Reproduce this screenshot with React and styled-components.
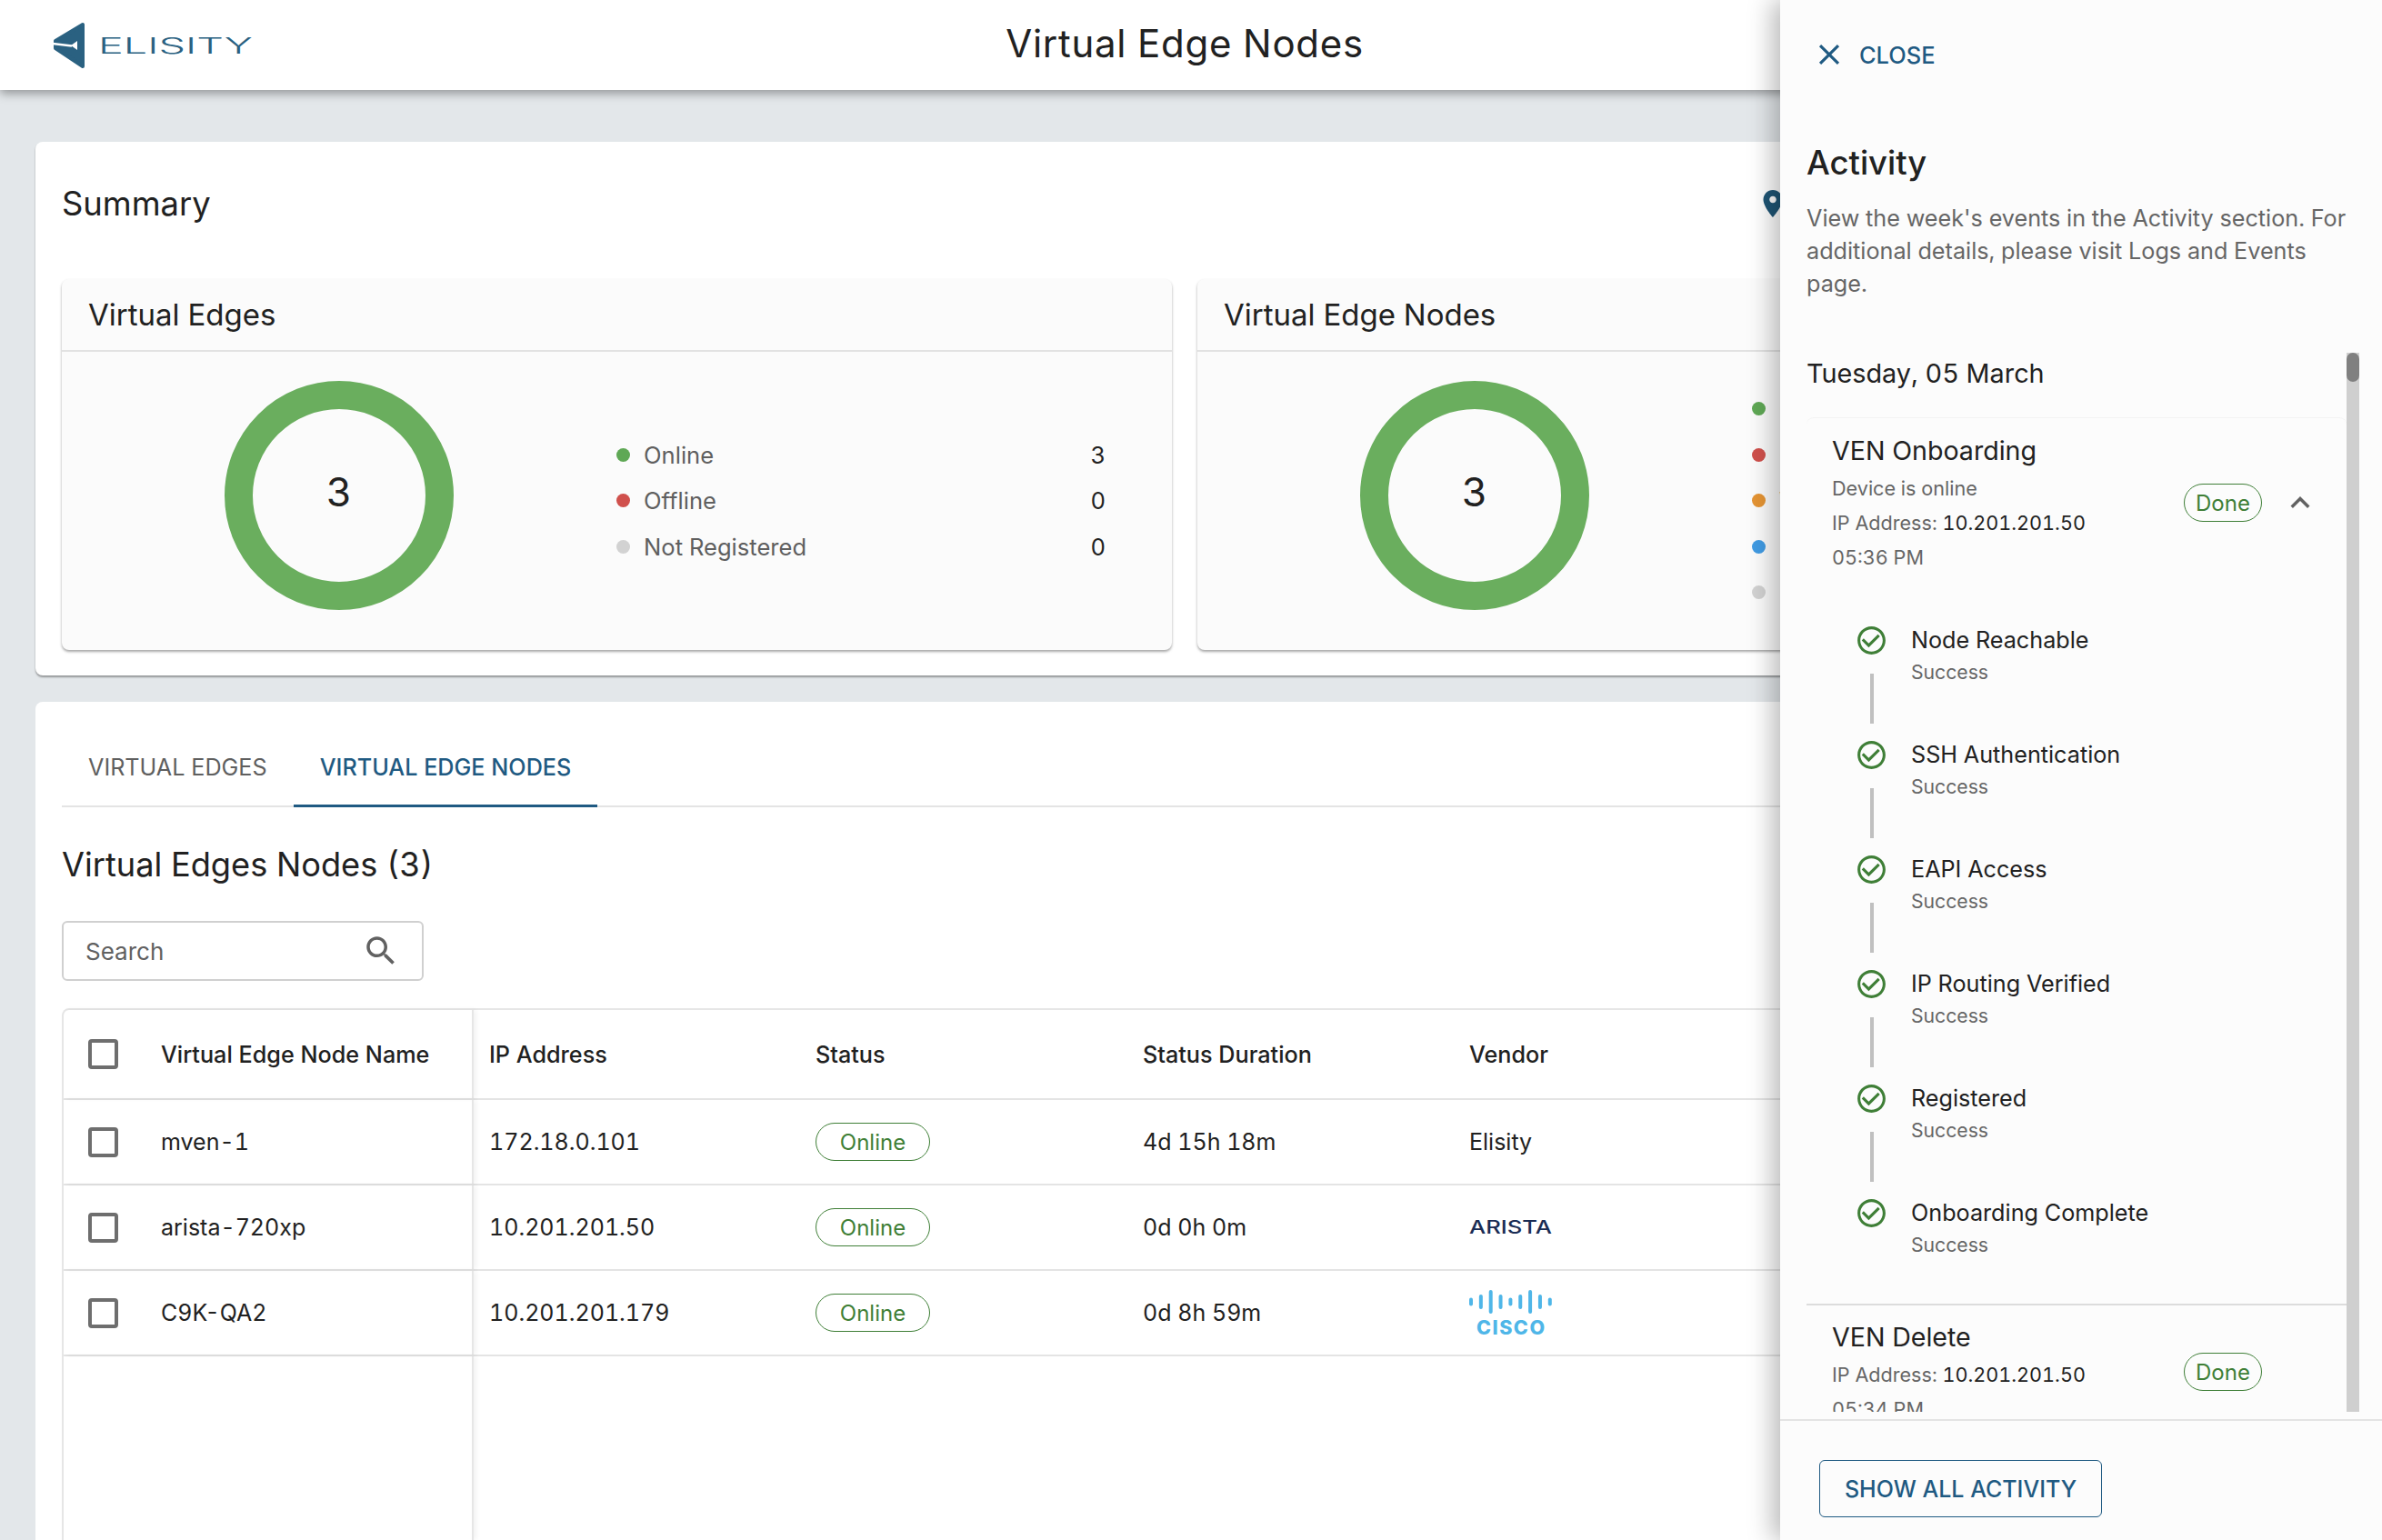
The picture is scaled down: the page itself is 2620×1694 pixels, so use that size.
import React from "react";
import styled, { createGlobalStyle } from "styled-components";

const GlobalStyle = createGlobalStyle`
  html, body {
    margin: 0;
    padding: 0;
    background: #e3e7ea;
    font-family: Inter, "Noto Sans", sans-serif;
    font-variant-numeric: tabular-nums;
    color: #212121;
  }
  * {
    box-sizing: border-box;
  }
`;

const BLUE = "#1f5a82";
const GREEN = "#3f7f37";

const rows = [
  { name: "mven-1", ip: "172.18.0.101", duration: "4d 15h 18m", vendor: "elisity" },
  { name: "arista-720xp", ip: "10.201.201.50", duration: "0d 0h 0m", vendor: "arista" },
  { name: "C9K-QA2", ip: "10.201.201.179", duration: "0d 8h 59m", vendor: "cisco" },
];

const steps = [
  "Node Reachable",
  "SSH Authentication",
  "EAPI Access",
  "IP Routing Verified",
  "Registered",
  "Onboarding Complete",
];

function Logo() {
  return (
    <LogoRow>
      <svg width="36" height="52" viewBox="-1 -1 36 52">
        <path
          d="M32 2V48L2 28V20Z"
          fill="#2a6181"
          stroke="#2a6181"
          strokeWidth="4"
          strokeLinejoin="round"
        />
        <path d="M-1 23 L20 25.5" stroke="#fff" strokeWidth="2.6" />
        <path d="M19 25 L26 20 V30Z" fill="#fff" />
      </svg>
      <svg width="172" height="20" viewBox="0 0 172 20">
        <text
          x="0"
          y="18"
          fontFamily="Inter, sans-serif"
          fontSize="23.5"
          fontWeight="300"
          fill="#2a6181"
          textLength="170"
          lengthAdjust="spacingAndGlyphs"
        >
          ELISITY
        </text>
      </svg>
    </LogoRow>
  );
}

function Ring() {
  return (
    <RingWrap>
      <svg width="252" height="252" viewBox="0 0 252 252">
        <circle cx="126" cy="126" r="110.5" fill="none" stroke="#6aae5e" strokeWidth="31" />
      </svg>
      <RingValue>3</RingValue>
    </RingWrap>
  );
}

function AristaLogo() {
  return (
    <svg width="92" height="20" viewBox="0 0 92 20">
      <text
        x="0"
        y="17"
        fontFamily="Inter, sans-serif"
        fontSize="19.5"
        fontWeight="500"
        fill="#1a2c54"
        textLength="91"
        lengthAdjust="spacingAndGlyphs"
      >
        ARISTA
      </text>
    </svg>
  );
}

function CiscoLogo() {
  const bars = [9, 16, 26, 16, 9, 16, 26, 16, 9];
  return (
    <svg width="92" height="50" viewBox="0 0 92 50">
      {bars.map((h, i) => (
        <rect
          key={i}
          x={0 + i * 10.85}
          y={13 - h / 2}
          width="4"
          height={h}
          rx="2"
          fill="#4fb6e8"
        />
      ))}
      <text
        x="8"
        y="49"
        fontFamily="Inter, sans-serif"
        fontSize="21.5"
        fontWeight="800"
        fill="#4fb6e8"
        textLength="75"
        lengthAdjust="spacing"
      >
        CISCO
      </text>
    </svg>
  );
}

function Legend({ items }) {
  return (
    <LegendList>
      {items.map((item) => (
        <LegendRow key={item.label}>
          <Dot $color={item.color} />
          <LegendLabel>{item.label}</LegendLabel>
          <LegendValue>{item.value}</LegendValue>
        </LegendRow>
      ))}
    </LegendList>
  );
}

function CheckIcon() {
  return (
    <svg width="37" height="37" viewBox="0 0 24 24" fill={GREEN}>
      <path d="M16.59 7.58 10 14.17l-3.59-3.58L5 12l5 5 8-8zM12 2C6.48 2 2 6.48 2 12s4.48 10 10 10 10-4.48 10-10S17.52 2 12 2zm0 18c-4.42 0-8-3.58-8-8s3.58-8 8-8 8 3.58 8 8-3.58 8-8 8z" />
    </svg>
  );
}

export default function App() {
  return (
    <Page>
      <GlobalStyle />
      <Header>
        <Logo />
        <PageTitle>Virtual Edge Nodes</PageTitle>
      </Header>

      <Content>
        <SummaryPanel>
          <SummaryHead>
            <SummaryTitle>Summary</SummaryTitle>
            <PinIcon width="36" height="36" viewBox="0 0 24 24" fill="#1f5676">
              <path d="M12 2C8.13 2 5 5.13 5 9c0 5.25 7 13 7 13s7-7.75 7-13c0-3.87-3.13-7-7-7zm0 9.5c-1.38 0-2.5-1.12-2.5-2.5s1.12-2.5 2.5-2.5 2.5 1.12 2.5 2.5-1.12 2.5-2.5 2.5z" />
            </PinIcon>
          </SummaryHead>
          <StatCards>
            <StatCard>
              <StatHead>Virtual Edges</StatHead>
              <StatBody>
                <Ring />
                <Legend
                  items={[
                    { label: "Online", value: 3, color: "#5fa855" },
                    { label: "Offline", value: 0, color: "#d0504c" },
                    { label: "Not Registered", value: 0, color: "#d2d2d2" },
                  ]}
                />
              </StatBody>
            </StatCard>
            <StatCard>
              <StatHead>Virtual Edge Nodes</StatHead>
              <StatBody>
                <Ring />
                <Legend
                  items={[
                    { label: "Online", value: 3, color: "#5fa855" },
                    { label: "Offline", value: 0, color: "#d0504c" },
                    { label: "Warning", value: 0, color: "#e59433" },
                    { label: "Pending", value: 0, color: "#419be3" },
                    { label: "Not Registered", value: 0, color: "#d2d2d2" },
                  ]}
                />
              </StatBody>
            </StatCard>
          </StatCards>
        </SummaryPanel>

        <TablePanel>
          <Tabs>
            <Tab>VIRTUAL EDGES</Tab>
            <Tab $active>VIRTUAL EDGE NODES</Tab>
          </Tabs>
          <SectionTitle>Virtual Edges Nodes (3)</SectionTitle>
          <SearchBox>
            <SearchText>Search</SearchText>
            <svg width="42" height="42" viewBox="0 0 24 24" fill="#616161">
              <path d="M15.5 14h-.79l-.28-.27C15.41 12.59 16 11.11 16 9.5 16 5.91 13.09 3 9.5 3S3 5.91 3 9.5 5.91 16 9.5 16c1.61 0 3.09-.59 4.23-1.57l.27.28v.79l5 4.99L20.49 19l-4.99-5zm-6 0C7.01 14 5 11.99 5 9.5S7.01 5 9.5 5 14 7.01 14 9.5 11.99 14 9.5 14z" />
            </svg>
          </SearchBox>
          <TableBox>
            <Row $head>
              <NameCell>
                <CheckBox />
                <HeadText>Virtual Edge Node Name</HeadText>
              </NameCell>
              <Cell><HeadText>IP Address</HeadText></Cell>
              <Cell><HeadText>Status</HeadText></Cell>
              <Cell><HeadText>Status Duration</HeadText></Cell>
              <Cell><HeadText>Vendor</HeadText></Cell>
            </Row>
            {rows.map((row) => (
              <Row key={row.name}>
                <NameCell>
                  <CheckBox />
                  <CellText>{row.name}</CellText>
                </NameCell>
                <Cell><CellText>{row.ip}</CellText></Cell>
                <Cell><StatusPill>Online</StatusPill></Cell>
                <Cell><CellText>{row.duration}</CellText></Cell>
                <Cell>
                  {row.vendor === "elisity" && <CellText>Elisity</CellText>}
                  {row.vendor === "arista" && <AristaLogo />}
                  {row.vendor === "cisco" && <CiscoLogo />}
                </Cell>
              </Row>
            ))}
            <FillerRow>
              <FillerCell />
            </FillerRow>
          </TableBox>
        </TablePanel>
      </Content>

      <Drawer>
        <CloseButton>
          <svg width="38" height="38" viewBox="0 0 24 24" fill={BLUE}>
            <path d="M19 6.41 17.59 5 12 10.59 6.41 5 5 6.41 10.59 12 5 17.59 6.41 19 12 13.41 17.59 19 19 17.59 13.41 12z" />
          </svg>
          CLOSE
        </CloseButton>
        <DrawerTitle>Activity</DrawerTitle>
        <DrawerText>
          View the week's events in the Activity section. For additional details, please visit Logs
          and Events page.
        </DrawerText>

        <ActivityArea>
          <ActivityList>
            <DateLabel>Tuesday, 05 March</DateLabel>
            <EventCard $first>
              <EventHead>
                <EventInfo>
                  <EventTitle>VEN Onboarding</EventTitle>
                  <EventLine>Device is online</EventLine>
                  <EventLine>
                    IP Address: <strong>10.201.201.50</strong>
                  </EventLine>
                  <EventLine>05:36 PM</EventLine>
                </EventInfo>
                <DonePill>Done</DonePill>
                <ChevronSlot>
                  <svg width="42" height="42" viewBox="0 0 24 24" fill="#616161">
                    <path d="M12 8l-6 6 1.41 1.41L12 10.83l4.59 4.58L18 14z" />
                  </svg>
                </ChevronSlot>
              </EventHead>
              <StepList>
                {steps.map((step, i) => (
                  <Step key={step}>
                    <StepMarker>
                      <CheckIcon />
                      {i < steps.length - 1 && <Connector />}
                    </StepMarker>
                    <div>
                      <StepTitle>{step}</StepTitle>
                      <StepSub>Success</StepSub>
                    </div>
                  </Step>
                ))}
              </StepList>
            </EventCard>
            <EventCard>
              <EventHead>
                <EventInfo>
                  <EventTitle>VEN Delete</EventTitle>
                  <EventLine>
                    IP Address: <strong>10.201.201.50</strong>
                  </EventLine>
                  <EventLine>05:34 PM</EventLine>
                </EventInfo>
                <DonePill>Done</DonePill>
                <ChevronSlot />
              </EventHead>
            </EventCard>
          </ActivityList>
          <ScrollTrack>
            <ScrollThumb />
          </ScrollTrack>
        </ActivityArea>

        <DrawerFooter>
          <OutlineButton>SHOW ALL ACTIVITY</OutlineButton>
        </DrawerFooter>
      </Drawer>
    </Page>
  );
}

const Page = styled.div`
  position: relative;
  width: 2620px;
  height: 1694px;
  overflow: hidden;
  display: flex;
  flex-direction: column;
  background: #e3e7ea;
`;
const Header = styled.header`
  position: relative;
  z-index: 2;
  flex: 0 0 99px;
  display: grid;
  grid-template-columns: 1fr auto 1fr;
  align-items: center;
  background: #fff;
  box-shadow: 0 4px 10px rgba(0, 0, 0, 0.35);
`;
const LogoRow = styled.div`
  display: flex;
  align-items: center;
  gap: 14px;
  margin-left: 58px;
  svg:last-child {
    margin-top: 2px;
  }
`;
const PageTitle = styled.h1`
  margin: 0;
  font-size: 42px;
  font-weight: 400;
  line-height: 1;
  letter-spacing: 0.7px;
  color: #212121;
  transform: translate(-7px, -2px);
`;
const Content = styled.main`
  flex: 1;
  min-height: 0;
  display: flex;
  flex-direction: column;
  gap: 29px;
  padding: 57px 39px 0;
`;
const SummaryPanel = styled.section`
  flex: 0 0 587px;
  padding: 0 29px;
  background: #fff;
  border-radius: 8px;
  box-shadow: 0 2px 2px rgba(0, 0, 0, 0.35);
`;
const SummaryHead = styled.div`
  height: 151px;
  display: flex;
  align-items: center;
  justify-content: space-between;
  padding-bottom: 15px;
`;
const SummaryTitle = styled.h2`
  margin: 0;
  font-size: 36.4px;
  font-weight: 400;
  line-height: 44px;
  color: #212121;
`;
const PinIcon = styled.svg`
  margin-right: 584px;
`;
const StatCards = styled.div`
  display: flex;
  gap: 28px;
`;
const StatCard = styled.div`
  flex: 0 0 1221px;
  height: 408px;
  background: #fbfbfb;
  border-radius: 8px;
  box-shadow: 0 2px 3px rgba(0, 0, 0, 0.35);
`;
const StatHead = styled.div`
  height: 80px;
  display: flex;
  align-items: center;
  padding-left: 29px;
  font-size: 33px;
  font-weight: 400;
  border-bottom: 2px solid #e2e2e2;
  color: #212121;
`;
const StatBody = styled.div`
  height: 328px;
  display: flex;
  align-items: center;
  padding: 0 73px 0 179px;
  gap: 179px;
`;
const RingWrap = styled.div`
  position: relative;
  flex: 0 0 252px;
  height: 252px;
  margin-top: -12px;
`;
const RingValue = styled.div`
  position: absolute;
  inset: 0 0 8px;
  display: flex;
  align-items: center;
  justify-content: center;
  font-size: 44px;
  color: #212121;
`;
const LegendList = styled.div`
  flex: 1;
  display: flex;
  flex-direction: column;
  margin-top: -1px;
`;
const LegendRow = styled.div`
  height: 50.5px;
  display: flex;
  align-items: center;
  color: #5f5f5f;
  font-size: 25.6px;
`;
const Dot = styled.span`
  flex: 0 0 15px;
  height: 15px;
  border-radius: 50%;
  margin-right: 15px;
  background: ${(p) => p.$color};
`;
const LegendLabel = styled.span`
  flex: 1;
`;
const LegendValue = styled.span`
  color: #212121;
`;
const TablePanel = styled.section`
  flex: 1;
  min-height: 0;
  display: flex;
  flex-direction: column;
  padding: 0 0 0 29px;
  background: #fff;
  border-radius: 8px 8px 0 0;
`;
const Tabs = styled.div`
  flex: 0 0 116px;
  display: flex;
  align-items: flex-end;
  border-bottom: 2px solid #e4e4e4;
  margin-right: 29px;
`;
const Tab = styled.div`
  height: 85px;
  display: flex;
  align-items: center;
  padding: 0 29px;
  margin-bottom: -2px;
  font-size: 25.2px;
  font-weight: ${(p) => (p.$active ? 500 : 400)};
  color: ${(p) => (p.$active ? BLUE : "#5f5f5f")};
  border-bottom: 3px solid ${(p) => (p.$active ? BLUE : "transparent")};
`;
const SectionTitle = styled.h3`
  margin: 41px 0 40px;
  font-size: 36.2px;
  font-weight: 400;
  line-height: 44px;
  color: #212121;
`;
const SearchBox = styled.div`
  flex: 0 0 66px;
  width: 398px;
  display: flex;
  align-items: center;
  justify-content: space-between;
  padding: 0 24px;
  border: 2px solid #d0d0d0;
  border-radius: 6px;
`;
const SearchText = styled.span`
  font-size: 26px;
  color: #616161;
`;
const TableBox = styled.div`
  flex: 1;
  min-height: 0;
  display: flex;
  flex-direction: column;
  margin-top: 30px;
  margin-right: 29px;
  border: 2px solid #e6e6e6;
  border-bottom: none;
  border-radius: 8px 8px 0 0;
`;
const Row = styled.div`
  flex: 0 0 ${(p) => (p.$head ? "99px" : "94px")};
  display: grid;
  grid-template-columns: 451px 359px 360px 359px 360px 1fr;
  border-bottom: 2px solid #e4e4e4;
`;
const NameCell = styled.div`
  display: flex;
  align-items: center;
  gap: 47px;
  padding-left: 27px;
  border-right: 2px solid #e6e6e6;
  box-shadow: 3px 0 5px rgba(0, 0, 0, 0.05);
`;
const Cell = styled.div`
  display: flex;
  align-items: center;
  padding-left: 17px;
`;
const CheckBox = styled.span`
  flex: 0 0 33px;
  height: 33px;
  border: 4px solid #6e6e6e;
  border-radius: 4px;
`;
const HeadText = styled.span`
  font-size: 25.2px;
  font-weight: 500;
  color: #212121;
`;
const CellText = styled.span`
  font-size: 25px;
  color: #212121;
`;
const StatusPill = styled.span`
  width: 126px;
  height: 42px;
  display: flex;
  align-items: center;
  justify-content: center;
  border: 1.5px solid ${GREEN};
  border-radius: 21px;
  font-size: 24px;
  color: ${GREEN};
`;
const FillerRow = styled.div`
  flex: 1;
  display: flex;
`;
const FillerCell = styled.div`
  width: 451px;
  border-right: 2px solid #e6e6e6;
  box-shadow: 3px 0 5px rgba(0, 0, 0, 0.05);
`;
const Drawer = styled.aside`
  position: absolute;
  z-index: 3;
  top: 0;
  right: 0;
  bottom: 0;
  width: 662px;
  display: flex;
  flex-direction: column;
  background: #fcfcfc;
  box-shadow: -8px 0 26px rgba(0, 0, 0, 0.28);
`;
const CloseButton = styled.div`
  margin-top: 38px;
  height: 44px;
  display: flex;
  align-items: center;
  gap: 14px;
  padding-left: 35px;
  font-size: 25.4px;
  font-weight: 500;
  color: ${BLUE};
`;
const DrawerTitle = styled.h2`
  margin: 73px 0 0 29px;
  font-size: 36.4px;
  font-weight: 500;
  line-height: 48px;
  color: #212121;
`;
const DrawerText = styled.p`
  margin: 19px 33px 0 29px;
  font-size: 25.2px;
  line-height: 36px;
  color: #666;
`;
const ActivityArea = styled.div`
  margin: 58px 25px 0 29px;
  height: 1165px;
  display: flex;
`;
const ActivityList = styled.div`
  flex: 1;
  min-width: 0;
  overflow: hidden;
`;
const DateLabel = styled.div`
  height: 44px;
  margin-bottom: 27px;
  display: flex;
  align-items: center;
  font-size: 28.8px;
  color: #212121;
`;
const EventCard = styled.div`
  padding: ${(p) => (p.$first ? "16px" : "15px")} 0 0 28px;
  border-top: ${(p) => (p.$first ? "1px solid #f3f3f3" : "none")};
  border-bottom: ${(p) => (p.$first ? "2px solid #dcdcdc" : "none")};
  border-radius: ${(p) => (p.$first ? "8px 8px 0 0" : "0")};
`;
const EventHead = styled.div`
  display: flex;
  align-items: center;
  padding-right: 41px;
`;
const EventInfo = styled.div`
  flex: 1;
`;
const EventTitle = styled.div`
  font-size: 28.6px;
  line-height: 40px;
  margin-bottom: 2px;
  color: #212121;
`;
const EventLine = styled.div`
  font-size: 21.6px;
  line-height: 38px;
  color: #666;
  strong {
    font-weight: 400;
    color: #212121;
  }
`;
const DonePill = styled.span`
  flex: 0 0 86px;
  height: 42px;
  margin-top: -2px;
  display: flex;
  align-items: center;
  justify-content: center;
  border: 1.5px solid ${GREEN};
  border-radius: 21px;
  font-size: 24px;
  color: ${GREEN};
`;
const ChevronSlot = styled.div`
  flex: 0 0 20px;
  min-width: 0;
  margin: -2px 0 0 32px;
  display: flex;
  justify-content: center;
  svg {
    flex: none;
  }
`;
const StepList = styled.div`
  margin-top: 54px;
  padding-left: 25px;
  height: 748px;
`;
const Step = styled.div`
  height: 126px;
  display: flex;
  gap: 25px;
`;
const StepMarker = styled.div`
  flex: 0 0 37px;
  display: flex;
  flex-direction: column;
  align-items: center;
`;
const Connector = styled.span`
  width: 4px;
  height: 55px;
  margin-top: 18px;
  background: #c0c0c0;
`;
const StepTitle = styled.div`
  font-size: 25.2px;
  line-height: 36px;
  color: #212121;
`;
const StepSub = styled.div`
  font-size: 21.2px;
  line-height: 36px;
  margin-top: -1px;
  color: #666;
`;
const ScrollTrack = styled.div`
  flex: 0 0 14px;
  background: #cfcfcf;
`;
const ScrollThumb = styled.div`
  height: 32px;
  border-radius: 7px;
  background: #808080;
`;
const DrawerFooter = styled.div`
  margin-top: 8px;
  padding: 43px 0 0 43px;
  border-top: 2px solid #e4e4e4;
`;
const OutlineButton = styled.div`
  width: 311px;
  height: 63px;
  display: flex;
  align-items: center;
  justify-content: center;
  border: 1.5px solid ${BLUE};
  border-radius: 6px;
  font-size: 25px;
  font-weight: 500;
  color: ${BLUE};
`;
